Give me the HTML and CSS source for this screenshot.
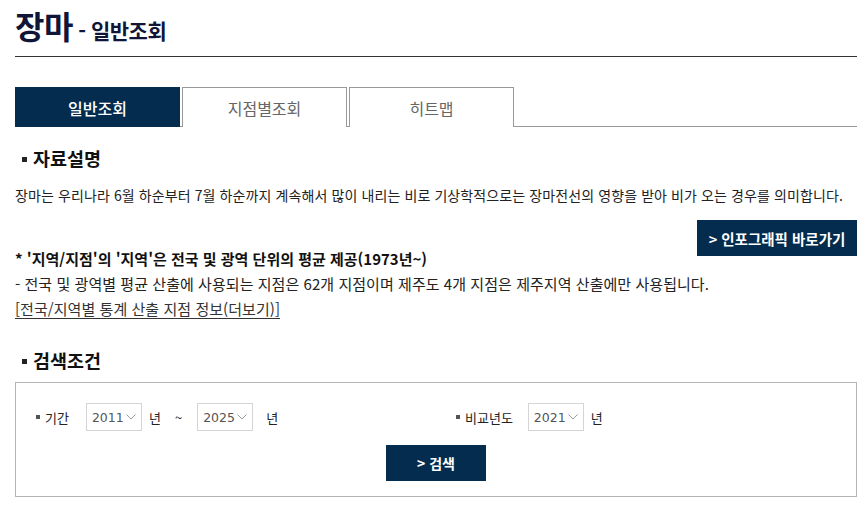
FILE: index.html
```html
<!DOCTYPE html>
<html lang="ko">
<head>
<meta charset="utf-8">
<link rel="stylesheet" href="styles.css">
</head>
<body>
<div class="page">
  <h1 class="title"><span class="title-main">장마</span><span class="title-sub"> - 일반조회</span></h1>
  <div class="tabs">
    <a class="tab active">일반조회</a>
    <a class="tab">지점별조회</a>
    <a class="tab">히트맵</a>
  </div>

  <h2 class="sec-head"><span class="sq"></span>자료설명</h2>
  <p class="desc">장마는 우리나라 6월 하순부터 7월 하순까지 계속해서 많이 내리는 비로 기상학적으로는 장마전선의 영향을 받아 비가 오는 경우를 의미합니다.</p>
  <div class="btn-row"><a class="btn info-btn">&gt; 인포그래픽 바로가기</a></div>
  <p class="note-b">* '지역/지점'의 '지역'은 전국 및 광역 단위의 평균 제공(1973년~)</p>
  <p class="note">- 전국 및 광역별 평균 산출에 사용되는 지점은 62개 지점이며 제주도 4개 지점은 제주지역 산출에만 사용됩니다.</p>
  <p class="note link"><a>[전국/지역별 통계 산출 지점 정보(더보기)]</a></p>

  <h2 class="sec-head sec2"><span class="sq"></span>검색조건</h2>
  <div class="search-box">
    <div class="cond-row">
      <div class="cond">
        <span class="lbl"><span class="sq-s"></span>기간</span>
        <span class="sel s1">2011<svg class="chev" width="10" height="6" viewBox="0 0 10 6"><path d="M0.5 0.5 L5 5 L9.5 0.5" fill="none" stroke="#999" stroke-width="1"/></svg></span>
        <span class="unit u1">년</span>
        <span class="tilde">~</span>
        <span class="sel s2">2025<svg class="chev" width="10" height="6" viewBox="0 0 10 6"><path d="M0.5 0.5 L5 5 L9.5 0.5" fill="none" stroke="#999" stroke-width="1"/></svg></span>
        <span class="unit u2">년</span>
      </div>
      <div class="cond">
        <span class="lbl"><span class="sq-s"></span>비교년도</span>
        <span class="sel s3">2021<svg class="chev" width="10" height="6" viewBox="0 0 10 6"><path d="M0.5 0.5 L5 5 L9.5 0.5" fill="none" stroke="#999" stroke-width="1"/></svg></span>
        <span class="unit u1">년</span>
      </div>
    </div>
    <div class="search-row"><a class="btn search-btn">&gt; 검색</a></div>
  </div>
</div>
</body>
</html>
```

FILE: styles.css
```css
* { box-sizing: border-box; }
html, body { margin: 0; padding: 0; background: #fff; }
body {
  font-family: "Noto Sans CJK KR", "Noto Sans", sans-serif;
  color: #222;
}
.page {
  width: 842px;
  margin-left: 15px;
}
.title {
  margin: 0;
  padding-top: 4px;
  height: 57px;
  border-bottom: 1px solid #333;
  color: #111639;
  font-weight: 700;
  line-height: 42px;
}
.title-main { font-size: 32px; letter-spacing: -0.5px; }
.title-sub { font-size: 21px; letter-spacing: -0.5px; }
.tabs {
  display: flex;
  margin-top: 30px;
  height: 40px;
  border-bottom: 1px solid #999;
}
.tab {
  width: 165px;
  height: 40px;
  display: flex;
  align-items: center;
  justify-content: center;
  font-size: 16px;
  color: #666;
  border: 1px solid #999;
  border-bottom: none;
  margin-right: 2px;
  background: #fff;
}
.tab.active {
  background: #032c4f;
  color: #fff;
  border-color: #032c4f;
  height: 40px;
  margin-bottom: -1px;
  font-weight: 500;
}
.sec-head {
  margin: 18px 0 0 7px;
  font-size: 18.5px;
  font-weight: 700;
  color: #111;
  line-height: 26px;
  display: flex;
  align-items: center;
}
.sq {
  display: inline-block;
  width: 5px;
  height: 5px;
  background: #222;
  margin-right: 6px;
  margin-top: 2px;
}
.desc {
  margin: 14px 0 0;
  font-size: 14px;
  letter-spacing: 0.1px;
  line-height: 20px;
  color: #222;
}
.btn-row {
  display: flex;
  justify-content: flex-end;
  margin-top: 15px;
}
.btn {
  display: flex;
  align-items: center;
  justify-content: center;
  background: #032c4f;
  color: #fff;
  font-weight: 700;
  font-size: 14px;
}
.info-btn { width: 160px; height: 36px; font-size: 14.5px; }
.note-b {
  margin: -9px 0 0;
  font-size: 15px;
  font-weight: 700;
  line-height: 24px;
  color: #111;
}
.note {
  margin: 0;
  font-size: 15px;
  letter-spacing: 0.05px;
  line-height: 25px;
  color: #222;
}
.note.link a {
  color: #333;
  text-decoration: underline;
  text-underline-offset: 3px;
}
.sec2 { margin-top: 26px; }
.search-box {
  margin-top: 9px;
  border: 1px solid #b5b5b5;
  height: 115px;
  padding-top: 20px;
}
.cond-row {
  display: grid;
  grid-template-columns: 420px 420px;
}
.cond {
  display: flex;
  align-items: center;
  padding-left: 20px;
  height: 28px;
  font-size: 13px;
  color: #222;
}
.lbl { display: flex; align-items: center; }
.sq-s {
  display: inline-block;
  width: 4px;
  height: 4px;
  background: #555;
  margin-right: 5px;
}
.sel {
  display: flex;
  align-items: center;
  width: 56px;
  height: 28px;
  border: 1px solid #d5d5d5;
  padding-left: 5px;
  font-family: "DejaVu Sans", "Noto Sans", sans-serif;
  font-size: 12.5px;
  color: #555;
  margin-left: 17px;
}
.chev { margin-left: 2px; margin-top: -1px; }
.s2 { margin-left: 15px; }
.s3 { margin-left: 15px; }
.unit.u1 { margin-left: 7px; }
.unit.u2 { margin-left: 13px; }
.tilde { margin-left: 14px; }
.search-row {
  display: flex;
  justify-content: center;
  margin-top: 14px;
}
.search-btn { width: 100px; height: 36px; }
```
